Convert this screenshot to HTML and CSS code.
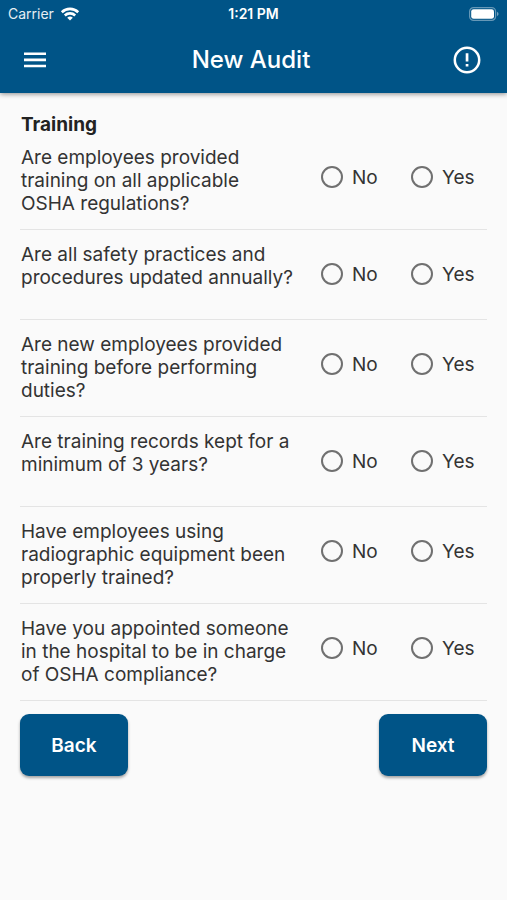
FILE: index.html
```html
<!DOCTYPE html>
<html lang="en">
<head>
<meta charset="utf-8">
<meta name="viewport" content="width=device-width, initial-scale=1">
<title>New Audit</title>
<link rel="stylesheet" href="styles.css">
</head>
<body>
<header class="top">
  <div class="status">
    <div class="carrier">
      <span>Carrier</span>
      <svg width="20" height="14" viewBox="0 0 20 14" aria-hidden="true" fill="none" stroke="#fff" stroke-width="2.6">
        <path d="M1.8 5.2C6.4.7 13.600.7 18.200 5.200"/>
        <path d="M4.800 8.500C7.700 5.700 12.300 5.700 15.200 8.500"/>
        <path d="M10 13.500L7.200 10.700Q10 8.500 12.800 10.700Z" fill="#fff" stroke="none"/>
      </svg>
    </div>
    <time class="clock">1:21 PM</time>
    <svg class="battery" width="30" height="14" viewBox="0 0 30 14" aria-hidden="true">
      <rect x=".6" y=".6" width="26" height="12.800" rx="4" fill="none" stroke="#fff" stroke-opacity=".4" stroke-width="1.200"/>
      <rect x="2.200" y="2.200" width="22.800" height="9.600" rx="2.400" fill="#fff"/>
      <path d="M28 4.800Q31.200 7 28 9.200Z" fill="#fff" fill-opacity=".45"/>
    </svg>
  </div>
  <div class="bar">
    <button class="icon" type="button" aria-label="Menu">
      <svg width="30" height="30" viewBox="0 0 30 30" fill="#fff"><path d="M4 7.500h22v2.600H4zM4 13.600h22v2.600H4zM4 19.700h22v2.600H4z"/></svg>
    </button>
    <h1 class="title">New Audit</h1>
    <button class="icon" type="button" aria-label="Information">
      <svg width="30" height="30" viewBox="0 0 30 30"><circle cx="15" cy="15" r="12.200" fill="none" stroke="#fff" stroke-width="2.500"/><path d="M13.700 8.200h2.700v8.200h-2.700zM13.700 18.900h2.700v2.700h-2.700z" fill="#fff"/></svg>
    </button>
  </div>
</header>
<main class="page">
  <form>
    <h2 class="section">Training</h2>
    <fieldset class="row" aria-labelledby="q1">
      <p class="question" id="q1">Are employees provided training on all applicable <span class="keep">OSHA regulations?</span></p>
      <label class="option"><input type="radio" name="q1" value="no">No</label>
      <label class="option"><input type="radio" name="q1" value="yes">Yes</label>
    </fieldset>
    <fieldset class="row" aria-labelledby="q2">
      <p class="question" id="q2">Are all safety practices and procedures updated annually?</p>
      <label class="option"><input type="radio" name="q2" value="no">No</label>
      <label class="option"><input type="radio" name="q2" value="yes">Yes</label>
    </fieldset>
    <fieldset class="row" aria-labelledby="q3">
      <p class="question" id="q3">Are new employees provided training before performing duties?</p>
      <label class="option"><input type="radio" name="q3" value="no">No</label>
      <label class="option"><input type="radio" name="q3" value="yes">Yes</label>
    </fieldset>
    <fieldset class="row" aria-labelledby="q4">
      <p class="question" id="q4">Are training records kept for a minimum of 3 years?</p>
      <label class="option"><input type="radio" name="q4" value="no">No</label>
      <label class="option"><input type="radio" name="q4" value="yes">Yes</label>
    </fieldset>
    <fieldset class="row" aria-labelledby="q5">
      <p class="question" id="q5">Have employees using radiographic equipment been properly trained?</p>
      <label class="option"><input type="radio" name="q5" value="no">No</label>
      <label class="option"><input type="radio" name="q5" value="yes">Yes</label>
    </fieldset>
    <fieldset class="row" aria-labelledby="q6">
      <p class="question" id="q6">Have you appointed someone in the hospital to be in charge of OSHA compliance?</p>
      <label class="option"><input type="radio" name="q6" value="no">No</label>
      <label class="option"><input type="radio" name="q6" value="yes">Yes</label>
    </fieldset>
    <div class="actions">
      <button class="button" type="button">Back</button>
      <button class="button" type="button">Next</button>
    </div>
  </form>
</main>
</body>
</html>
```
FILE: styles.css
```css
* {
  box-sizing: border-box;
}

body {
  margin: 0;
  min-height: 100vh;
  background: #fafafa;
  color: #333;
  font-family: Inter, "Liberation Sans", sans-serif;
  font-size: 19px;
  line-height: 23px;
}

.top {
  background: #005487;
  color: #fff;
  box-shadow: 0 1px 5px rgba(0, 0, 0, 0.45);
}

.status {
  display: grid;
  grid-template-columns: 1fr auto 1fr;
  align-items: center;
  height: 27px;
  padding: 0 8px;
  font-size: 14px;
  line-height: 20px;
}

.carrier {
  display: flex;
  align-items: center;
  gap: 6px;
  color: #e6eef3;
}

.clock {
  font-weight: 600;
}

.battery {
  justify-self: end;
}

.bar {
  display: flex;
  align-items: center;
  justify-content: space-between;
  height: 66px;
  padding: 0 25px 0 20px;
}

.icon {
  display: block;
  padding: 0;
  border: 0;
  background: none;
}

.icon svg {
  display: block;
}

.title {
  margin: 0;
  font-size: 24px;
  line-height: 30px;
  font-weight: 500;
}

.page {
  padding: 20px;
}

.section {
  margin: 0 0 10px;
  padding-left: 1px;
  color: #222;
  font-size: 19px;
  line-height: 23px;
  font-weight: 700;
}

.row {
  display: grid;
  grid-template-columns: 1fr 90px 76px;
  align-items: start;
  min-width: 0;
  margin: 0 0 13px;
  padding: 0 0 14px;
  border: 0;
  border-bottom: 1px solid #e4e4e4;
}

.question {
  margin: 0;
  padding: 0 16px 0 1px;
}

.keep {
  white-space: nowrap;
}

.option {
  display: flex;
  align-items: center;
  gap: 9px;
  height: 62px;
}

.option input {
  flex: none;
  appearance: none;
  width: 22px;
  height: 22px;
  margin: 0;
  border: 2px solid #707070;
  border-radius: 50%;
}

.option input:checked {
  border-color: #005487;
  background: radial-gradient(#005487 50%, transparent 55%);
}

.actions {
  display: flex;
  justify-content: space-between;
}

.button {
  min-width: 108px;
  height: 62px;
  padding: 0 24px;
  border: 0;
  border-radius: 9px;
  background: #005487;
  box-shadow: 0 2px 3px rgba(0, 0, 0, 0.35);
  color: #fff;
  font: inherit;
  font-weight: 600;
}
```
